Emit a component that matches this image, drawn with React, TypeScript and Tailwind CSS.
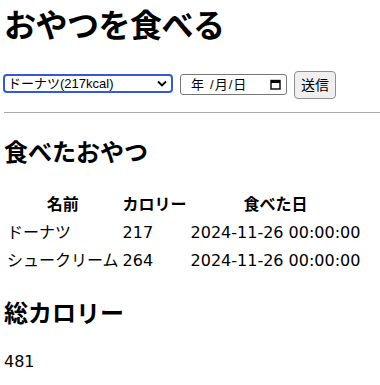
const snacks = [
  { name: 'ドーナツ', kcal: 217, date: '2024-11-26 00:00:00' },
  { name: 'シュークリーム', kcal: 264, date: '2024-11-26 00:00:00' },
]

export default function App() {
  const total = snacks.reduce((sum, s) => sum + s.kcal, 0)
  return (
    <div className="w-[380px] h-[385px] overflow-hidden bg-white text-black pl-1 font-['Noto_Sans_CJK_JP',sans-serif]">
      <h1 className="text-[32px] font-bold leading-[46px] tracking-[-0.5px]">おやつを食べる</h1>

      <form className="-ml-px mt-[23px] flex items-center h-[28px] font-['Liberation_Sans','Noto_Sans_CJK_JP',sans-serif]" onSubmit={(e) => e.preventDefault()}>
        <div className="w-[170px] h-[19px] border-2 border-[#3558d4] rounded-[4px] flex items-center justify-between pl-[3px] pr-[4px] text-[13px] leading-none">
          <span>ドーナツ(217kcal)</span>
          <svg width="10" height="7" viewBox="0 0 10 7">
            <path d="M1 1.5 L5 5.5 L9 1.5" fill="none" stroke="#000" strokeWidth="1.8" />
          </svg>
        </div>
        <div className="ml-[7px] mt-[2px] w-[107px] h-[21px] border border-[#767676] rounded-[3px] flex items-center pl-[10px] pr-[4px] text-[13px] leading-none">
          <span>年</span>
          <span className="ml-[6px] text-[13px] font-light">/</span>
          <span className="ml-[1px]">月</span>
          <span className="ml-[1px] text-[13px] font-light">/</span>
          <span className="ml-[1px]">日</span>
          <svg className="ml-auto mr-[1px]" width="11" height="11" viewBox="0 0 11 11">
            <rect x="1" y="1.5" width="9" height="8.5" fill="none" stroke="#000" strokeWidth="1.4" />
            <rect x="1" y="1.5" width="9" height="2.5" fill="#000" />
          </svg>
        </div>
        <button type="submit" className="ml-[7px] mt-[3px] w-[42px] h-[28px] bg-[#efefef] border border-[#8f8f8f] rounded-[4px] text-[14px] leading-none">
          送信
        </button>
      </form>

      <hr className="mt-[15px] border-0 border-t border-[#a8a8a8]" />

      <h2 className="mt-[20px] text-[24px] font-bold leading-[35px]">食べたおやつ</h2>

      <table className="mt-[22px] border-separate border-spacing-[2px] text-[16px] leading-[23px] font-['DejaVu_Sans','Noto_Sans_CJK_JP',sans-serif]">
        <thead>
          <tr>
            <th className="p-px font-bold">名前</th>
            <th className="p-px font-bold">カロリー</th>
            <th className="p-px font-bold">食べた日</th>
          </tr>
        </thead>
        <tbody>
          {snacks.map((s) => (
            <tr key={s.name}>
              <td className="px-px pt-[2px] pb-px">{s.name}</td>
              <td className="px-px pt-[2px] pb-px">{s.kcal}</td>
              <td className="px-px pt-[2px] pb-px">{s.date}</td>
            </tr>
          ))}
        </tbody>
      </table>

      <h2 className="mt-[19px] text-[24px] font-bold leading-[35px]">総カロリー</h2>
      <p className="mt-[21px] text-[16px] leading-[23px] font-['DejaVu_Sans','Noto_Sans_CJK_JP',sans-serif]">{total}</p>
    </div>
  )
}
